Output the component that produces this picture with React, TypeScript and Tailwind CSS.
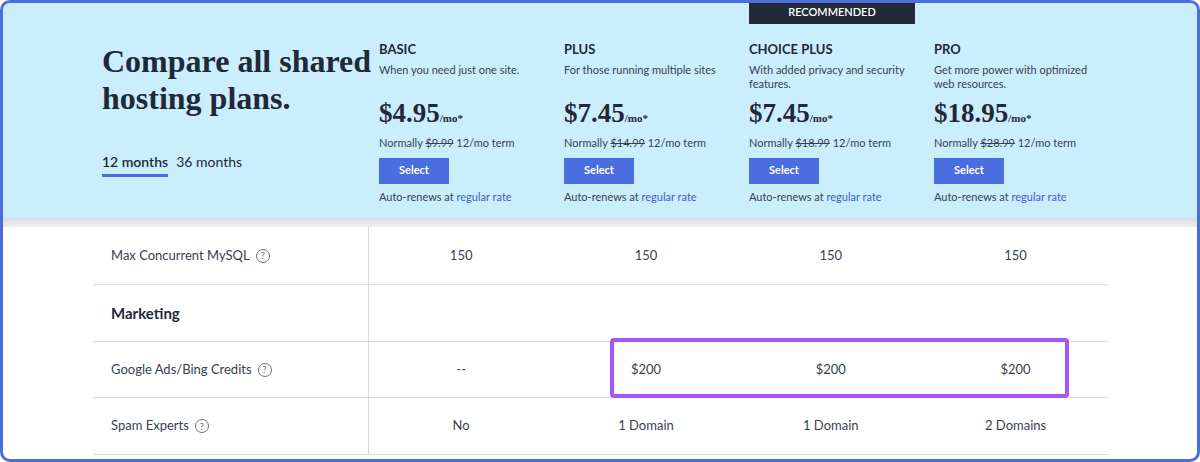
const plans = [
  { name: "BASIC", desc: "When you need just one site.", price: "$4.95", normal: "$9.99" },
  { name: "PLUS", desc: "For those running multiple sites", price: "$7.45", normal: "$14.99" },
  { name: "CHOICE PLUS", desc: "With added privacy and security features.", price: "$7.45", normal: "$18.99", rec: true },
  { name: "PRO", desc: "Get more power with optimized web resources.", price: "$18.95", normal: "$28.99" },
];

const Q = () => (
  <span className="inline-flex items-center justify-center w-[14px] h-[14px] rounded-full border border-[#6b7280] text-[9px] text-[#6b7280] ml-[6px] leading-none">?</span>
);

const rows = [
  { label: "Max Concurrent MySQL", vals: ["150", "150", "150", "150"], h: 58 },
  { label: "Marketing", section: true, vals: ["", "", "", ""], h: 57 },
  { label: "Google Ads/Bing Credits", vals: ["--", "$200", "$200", "$200"], h: 56 },
  { label: "Spam Experts", vals: ["No", "1 Domain", "1 Domain", "2 Domains"], h: 57 },
];

export default function App() {
  return (
    <div className="w-[1200px] h-[462px] overflow-hidden bg-white" style={{ fontFamily: "Lato, 'Open Sans', sans-serif" }}>
      <div className="relative w-full h-full border-[3px] border-[#4a6ee0] rounded-[10px] overflow-hidden bg-white">
        <div className="h-[215px] bg-[#cbeefd] flex">
          <div className="w-[376px] pl-[99px] pt-[40px] flex flex-col">
            <h1 className="text-[#1f2937] text-[32px] leading-[37px] font-bold" style={{ fontFamily: "'Liberation Serif', serif" }}>Compare all shared hosting plans.</h1>
            <div className="mt-[34px] flex gap-[8px] text-[14px] text-[#1f2937]">
              <span className="font-semibold border-b-[3px] border-[#4a6ee0] pb-[2px]">12 months</span>
              <span>36 months</span>
            </div>
          </div>
          {plans.map((p) => (
            <div key={p.name} className="relative w-[185px] pt-[37px]">
              {p.rec && (
                <div className="absolute top-[-3px] left-0 w-[166px] h-[24px] bg-[#232a36] text-white text-[11px] font-semibold flex items-center justify-center">RECOMMENDED</div>
              )}
              <div className="text-[13px] font-bold text-[#1f2937]">{p.name}</div>
              <div className="text-[11px] text-[#374151] leading-[14px] mt-[3px] h-[28px] pr-[12px]">{p.desc}</div>
              <div className="mt-[2px] flex items-baseline text-[#1f2937]" style={{ fontFamily: "'Liberation Serif', serif" }}>
                <span className="text-[27px] font-bold">{p.price}</span>
                <span className="text-[11px] font-bold">/mo*</span>
              </div>
              <div className="text-[11px] text-[#374151] mt-[2px]">Normally <span className="line-through">{p.normal}</span> 12/mo term</div>
              <div className="mt-[6px] w-[70px] h-[26px] bg-[#4a6ee0] text-white text-[11px] font-bold flex items-center justify-center">Select</div>
              <div className="text-[11px] text-[#374151] mt-[5px]">Auto-renews at <span className="text-[#3b5fc9]">regular rate</span></div>
            </div>
          ))}
        </div>
        <div className="h-[9px] bg-gradient-to-b from-[#d8dde2] to-[#eef0f2]" />
        <div className="ml-[90px] w-[1015px]">
          {rows.map((r) => (
            <div key={r.label} className="flex border-b border-[#d6dbe0]" style={{ height: r.h }}>
              <div className="w-[276px] border-r border-[#d6dbe0] flex items-center pl-[18px]">
                {r.section ? (
                  <span className="text-[15px] font-bold text-[#1f2937]">{r.label}</span>
                ) : (
                  <span className="text-[13px] text-[#374151] flex items-center">{r.label}<Q /></span>
                )}
              </div>
              {r.vals.map((v, i) => (
                <div key={i} className="w-[185px] flex items-center justify-center text-[13px] text-[#374151]">{v}</div>
              ))}
            </div>
          ))}
        </div>
        <div className="absolute left-[607px] top-[335px] w-[459px] h-[60px] border-[4px] border-[#a855f7] rounded-[4px]" />
      </div>
    </div>
  );
}
